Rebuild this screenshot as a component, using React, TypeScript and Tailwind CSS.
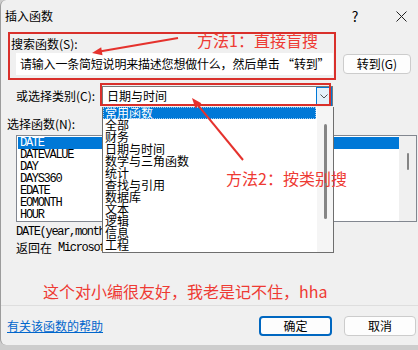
const cats = ['常用函数', '全部', '财务', '日期与时间', '数学与三角函数', '统计', '查找与引用', '数据库', '文本', '逻辑', '信息', '工程'];
const funcs = ['DATE', 'DATEVALUE', 'DAY', 'DAYS360', 'EDATE', 'EOMONTH', 'HOUR'];

function Arrows() {
  return (
    <svg className="absolute inset-0 pointer-events-none" width="418" height="350">
      <line x1="178" y1="38" x2="101" y2="51.3" stroke="#e5322d" strokeWidth="2" />
      <polygon points="92,53 102.5,55.2 101.2,47.3" fill="#e5322d" />
      <line x1="243" y1="160" x2="198.3" y2="105.7" stroke="#e5322d" strokeWidth="2" />
      <polygon points="192,98 201.4,103.2 195.3,108.3" fill="#e5322d" />
    </svg>
  );
}

export default function App() {
  return (
    <div className="relative w-[418px] h-[350px] overflow-hidden bg-[#cdcdcd] text-black text-[12px] font-['Noto_Sans_CJK_SC','Noto_Sans',sans-serif]">
      <div className="flex flex-col h-[345px] bg-[#f0f0f0] border-l border-[#9c9c9c] rounded-tl-[6px] rounded-bl-[6px]">
        {/* title bar */}
        <div className="flex items-center h-[32px] pl-[4px]">
          <span className="flex-1 leading-none">插入函数</span>
          <div className="flex mr-[-6px]">
            <div className="w-[46px] h-[32px] flex items-center justify-center text-[14px]">?</div>
            <div className="w-[46px] h-[32px] flex items-center justify-center">
              <svg width="11" height="11" viewBox="0 0 11 11">
                <path d="M0.5 0.5L10.5 10.5M10.5 0.5L0.5 10.5" stroke="#222" strokeWidth="1" />
              </svg>
            </div>
          </div>
        </div>

        {/* search */}
        <div className="mt-[4px] h-[16px] pl-[10px] flex items-center">搜索函数(S):</div>
        <div className="mt-[1px] flex items-center pl-[15px]">
          <div className="w-[317px] h-[22px] bg-white flex items-center pl-[4px] whitespace-nowrap tracking-[-0.2px]">
            请输入一条简短说明来描述您想做什么，然后单击 “转到”
          </div>
          <button className="ml-[10px] w-[68px] h-[20px] bg-[#fdfdfd] border border-[#cccccc] rounded-[4px] flex items-center justify-center">
            转到(G)
          </button>
        </div>

        {/* category */}
        <div className="mt-[11px] flex items-center h-[20px] pl-[15px]">
          <span className="w-[86px]">或选择类别(C):</span>
          <div className="w-[231px] h-[20px] bg-white border border-[#7a7a7a] flex items-center">
            <span className="flex-1 pl-[4px]">日期与时间</span>
            <div className="w-[16px] h-[19px] bg-[#e5f1fb] border border-[#0078d7] flex items-center justify-center">
              <svg width="8" height="5" viewBox="0 0 8 5">
                <path d="M0.5 0.5L4 4L7.5 0.5" fill="none" stroke="#555" strokeWidth="1" />
              </svg>
            </div>
          </div>
        </div>

        {/* function list */}
        <div className="mt-[10px] h-[16px] pl-[6px] flex items-center">选择函数(N):</div>
        <div className="mt-[3px] ml-[15px] w-[401px] h-[87px] bg-white border border-[#828790] flex">
          <div className="flex-1 pt-[1px] pl-[1px] font-['Liberation_Mono',monospace] tracking-[-1.3px]">
            {funcs.map((f, i) => (
              <div
                key={f}
                className={
                  i === 0
                    ? 'h-[12px] leading-[12px] pl-[2px] bg-[#0078d7] text-white'
                    : 'h-[12px] leading-[12px] pl-[2px]'
                }
              >
                {f}
              </div>
            ))}
          </div>
          <div className="w-[17px] bg-[#f0f0f0] flex justify-center pt-[17px]">
            <div className="w-[2px] h-[17px] rounded-full bg-[#858585]" />
          </div>
        </div>

        <div className="mt-[4px] pl-[15px] h-[12px] leading-[12px] font-['Liberation_Mono',monospace] tracking-[-1.3px]">
          DATE(year,month,day)
        </div>
        <div className="mt-[4px] pl-[15px] h-[12px] leading-[12px] flex items-center">
          <span>返回在</span>
          <span className="ml-[6px] font-['Liberation_Mono',monospace] tracking-[-1.3px]">Microsoft Excel</span>
        </div>

        <div className="flex-1" />

        {/* footer */}
        <div className="border-t border-[#dedede] h-[40px] flex items-center pl-[6px] pr-[2px]">
          <a className="flex-1 text-[#0066cc] underline leading-none">有关该函数的帮助</a>
          <button className="w-[73px] h-[20px] bg-[#fdfdfd] border-2 border-[#0067c0] rounded-[4px] flex items-center justify-center">
            确定
          </button>
          <button className="ml-[12px] w-[72px] h-[20px] bg-[#fdfdfd] border border-[#cccccc] rounded-[4px] flex items-center justify-center">
            取消
          </button>
        </div>
      </div>

      {/* open dropdown list */}
      <div className="absolute left-[102px] top-[107px] w-[232px] h-[146px] bg-white border border-[#6e6e6e] border-t-0 flex">
        <div className="flex-1 pr-[1px]">
          {cats.map((c, i) => (
            <div
              key={c}
              className={
                i === 0
                  ? 'h-[12px] leading-[12px] pl-[2px] bg-[#0078d7] text-white outline outline-1 outline-dotted outline-[#9ecbf0] -outline-offset-1'
                  : 'h-[12px] leading-[12px] pl-[2px]'
              }
            >
              {c}
            </div>
          ))}
        </div>
        <div className="w-[16px] bg-[#f5f5f5] flex justify-center pt-[17px]">
          <div className="w-[3px] h-[95px] rounded-full bg-[#858585]" />
        </div>
      </div>

      {/* annotations */}
      <div className="absolute left-[8px] top-[32px] w-[328px] h-[48px] border-2 border-[#d9302b]" />
      <div className="absolute left-[100px] top-[83px] w-[231px] h-[23px] border-2 border-[#d9302b]" />
      <div className="absolute left-[197px] top-[32px] text-[16px] leading-[17px] text-[#ee3a33] whitespace-nowrap">方法1：直接盲搜</div>
      <div className="absolute left-[226px] top-[170px] text-[16px] leading-[17px] text-[#ee3a33] whitespace-nowrap">方法2：按类别搜</div>
      <div className="absolute left-[43px] top-[283px] text-[16px] leading-[17px] text-[#ee3a33] whitespace-nowrap">这个对小编很友好，我老是记不住，hha</div>
      <Arrows />
    </div>
  );
}
